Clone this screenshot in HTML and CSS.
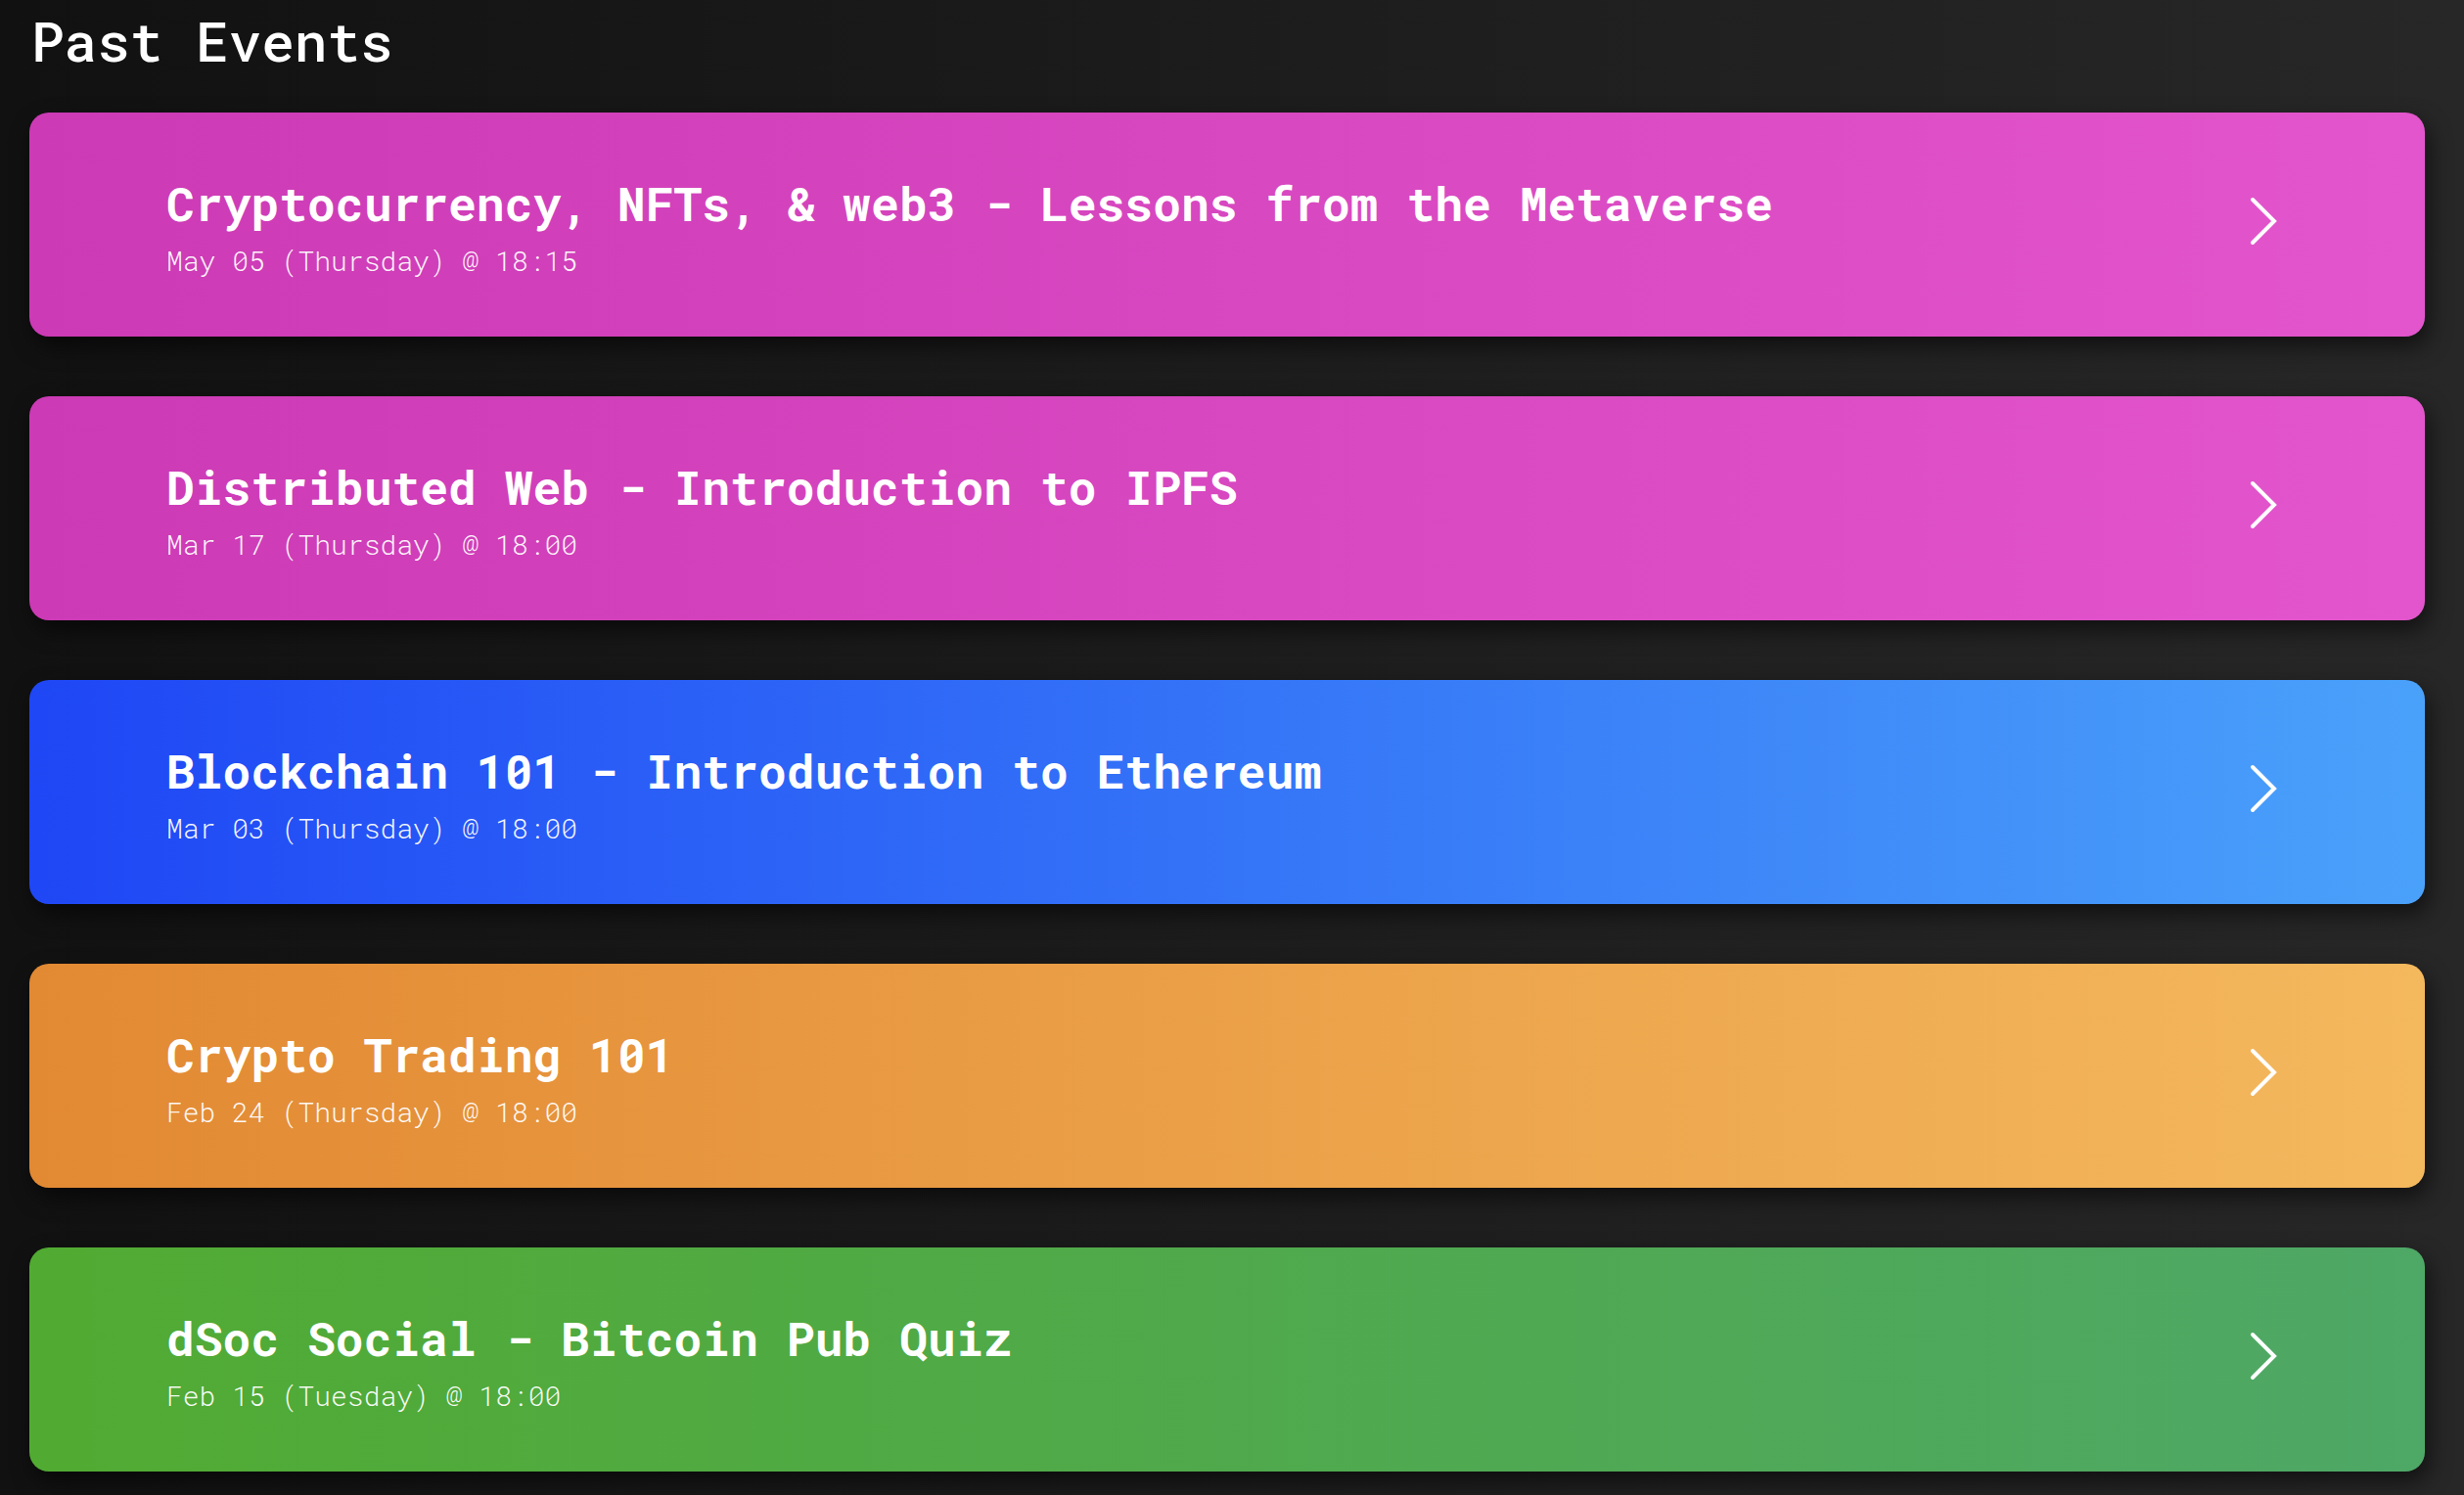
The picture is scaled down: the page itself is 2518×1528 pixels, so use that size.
FILE: index.html
```html
<!DOCTYPE html>
<html lang="en">
<head>
<meta charset="utf-8">
<title>Past Events</title>
<link rel="stylesheet" href="styles.css">
</head>
<body>
<main class="page">
  <h1 class="page-title">Past Events</h1>
  <ul class="event-list">
    <li class="event-card event-pink">
      <div class="event-text">
        <h2 class="event-title">Cryptocurrency, NFTs, &amp; web3 - Lessons from the Metaverse</h2>
        <p class="event-date">May 05 (Thursday) @ 18:15</p>
      </div>
      <svg class="chevron" viewBox="0 0 28 50" width="28" height="50"><path d="M3 3 L25 25 L3 47" /></svg>
    </li>
    <li class="event-card event-pink">
      <div class="event-text">
        <h2 class="event-title">Distributed Web - Introduction to IPFS</h2>
        <p class="event-date">Mar 17 (Thursday) @ 18:00</p>
      </div>
      <svg class="chevron" viewBox="0 0 28 50" width="28" height="50"><path d="M3 3 L25 25 L3 47" /></svg>
    </li>
    <li class="event-card event-blue">
      <div class="event-text">
        <h2 class="event-title">Blockchain 101 - Introduction to Ethereum</h2>
        <p class="event-date">Mar 03 (Thursday) @ 18:00</p>
      </div>
      <svg class="chevron" viewBox="0 0 28 50" width="28" height="50"><path d="M3 3 L25 25 L3 47" /></svg>
    </li>
    <li class="event-card event-orange">
      <div class="event-text">
        <h2 class="event-title">Crypto Trading 101</h2>
        <p class="event-date">Feb 24 (Thursday) @ 18:00</p>
      </div>
      <svg class="chevron" viewBox="0 0 28 50" width="28" height="50"><path d="M3 3 L25 25 L3 47" /></svg>
    </li>
    <li class="event-card event-green">
      <div class="event-text">
        <h2 class="event-title">dSoc Social - Bitcoin Pub Quiz</h2>
        <p class="event-date">Feb 15 (Tuesday) @ 18:00</p>
      </div>
      <svg class="chevron" viewBox="0 0 28 50" width="28" height="50"><path d="M3 3 L25 25 L3 47" /></svg>
    </li>
  </ul>
</main>
</body>
</html>
```

FILE: styles.css
```css
html, body {
  margin: 0;
  padding: 0;
}
body {
  min-height: 1528px;
  background: linear-gradient(to right, #111111 0%, #1c1c1c 50%, #272727 100%);
  font-family: "Roboto Mono", "DejaVu Sans Mono", "Liberation Mono", monospace;
  color: #ffffff;
  overflow: hidden;
}
.page {
  padding: 0 40px 0 30px;
}
.page-title {
  margin: 0;
  padding: 4px 0 0 2px;
  font-size: 56px;
  font-weight: 500;
  line-height: 74px;
  letter-spacing: 0;
}
.event-list {
  list-style: none;
  margin: 37px 0 0 0;
  padding: 0;
  display: flex;
  flex-direction: column;
  gap: 61px;
}
.event-card {
  height: 229px;
  box-sizing: border-box;
  border-radius: 20px;
  display: flex;
  align-items: center;
  justify-content: space-between;
  padding: 0 151px 0 140px;
  box-shadow: 4px 10px 22px rgba(0, 0, 0, 0.55);
}
.event-pink {
  background: linear-gradient(to right, #cc3ab5, #e355cc);
}
.event-blue {
  background: linear-gradient(to right, #1f47f5, #4aa1fa);
}
.event-orange {
  background: linear-gradient(to right, #e28933, #f4b85d);
}
.event-green {
  background: linear-gradient(to right, #51ab32, #4ea866);
}
.event-text {
  display: flex;
  flex-direction: column;
  margin-top: 4px;
}
.event-title {
  margin: 0;
  font-size: 48px;
  font-weight: 700;
  line-height: 60px;
  letter-spacing: 0;
}
.event-date {
  margin: 11px 0 0 0;
  font-size: 28px;
  font-weight: 300;
  line-height: 36px;
  color: rgba(255, 255, 255, 0.95);
}
.chevron {
  flex: none;
  margin-bottom: 7px;
}
.chevron path {
  fill: none;
  stroke: #ffffff;
  stroke-width: 4;
  stroke-linecap: round;
  stroke-linejoin: miter;
}
```
